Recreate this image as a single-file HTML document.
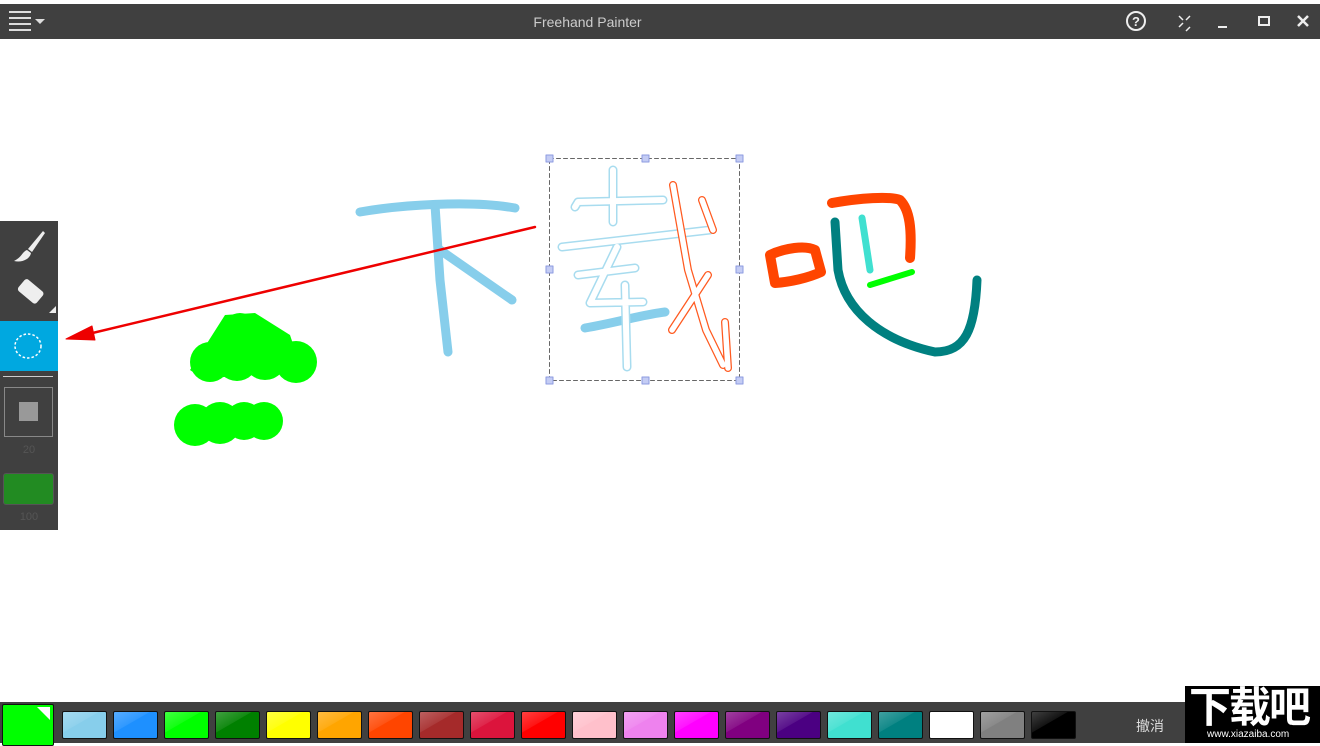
<!DOCTYPE html>
<html><head><meta charset="utf-8"><style>
body{margin:0;width:1320px;height:743px;overflow:hidden;background:#fff;font-family:"Liberation Sans","Noto Sans CJK SC",sans-serif;position:relative}
.t{position:absolute;left:0;top:4px;width:1320px;height:35px;background:#404040;color:#ccc;font-size:14px}
.sw{position:absolute;top:711px;width:43px;height:26px;border:1px solid #111;border-radius:2px;background-image:linear-gradient(150deg,rgba(255,255,255,.25) 0,rgba(255,255,255,.08) 40%,rgba(255,255,255,0) 41%)}
</style></head><body>
<div class="t">
<svg width="50" height="35" style="position:absolute;left:0;top:0"><g stroke="#ddd" stroke-width="2"><line x1="9" y1="8" x2="31" y2="8"/><line x1="9" y1="14" x2="31" y2="14"/><line x1="9" y1="20" x2="31" y2="20"/><line x1="9" y1="26" x2="31" y2="26"/></g><path d="M35 15h10l-5 5z" fill="#ddd"/></svg>
<div style="position:absolute;left:0;width:1175px;text-align:center;top:10px">Freehand Painter</div>
<svg width="210" height="35" style="position:absolute;left:1110px;top:0" fill="none" stroke="#eee" stroke-width="2"><circle cx="26" cy="17" r="9"/><text x="26" y="22" font-size="13" font-weight="bold" fill="#eee" stroke="none" text-anchor="middle">?</text><path d="M69 12l4 4M80 12l-4 4M69 23l4-4M80 23l-4 4" stroke-width="1.5"/><line x1="108" y1="23" x2="117" y2="23"/><rect x="149" y="13" width="10" height="8"/><path d="M188 12l10 10M198 12l-10 10" stroke-width="2.5"/></svg>
</div>
<svg width="1320" height="743" style="position:absolute;left:0;top:0" fill="none" stroke-linecap="round" stroke-linejoin="round">
<g stroke="#87ceeb" stroke-width="9"><path d="M360 212C400 205 470 200 515 208"/><path d="M435 205L440 280L448 352"/><path d="M440 250L512 300"/><path d="M585 328C620 322 640 315 665 312"/></g>
<g stroke="#a8dcef" stroke-width="9"><path d="M613 170L613 222M575 207L578 202L663 200M562 247L710 230M617 247L590 303L643 302M578 275L635 268M625 285L627 367"/></g>
<g stroke="#fff" stroke-width="6"><path d="M613 170L613 222M575 207L578 202L663 200M562 247L710 230M617 247L590 303L643 302M578 275L635 268M625 285L627 367"/></g>
<g stroke="#ff5a20" stroke-width="8"><path d="M673 185L688 270L706 330L723 365M725 322L728 368M702 200L713 230M708 275L672 330"/></g>
<g stroke="#fff" stroke-width="5.5"><path d="M673 185L688 270L706 330L723 365M725 322L728 368M702 200L713 230M708 275L672 330"/></g>
<rect x="549.5" y="158.5" width="190" height="222" stroke="#666" stroke-dasharray="4 3"/>
<g fill="#c4ccf4" stroke="#8d9be0" stroke-width="1"><rect x="546" y="155" width="7" height="7"/><rect x="642" y="155" width="7" height="7"/><rect x="736" y="155" width="7" height="7"/><rect x="546" y="266" width="7" height="7"/><rect x="736" y="266" width="7" height="7"/><rect x="546" y="377" width="7" height="7"/><rect x="642" y="377" width="7" height="7"/><rect x="736" y="377" width="7" height="7"/></g>
<path d="M535 227L80 336" stroke="#e00" stroke-width="2.5"/><path d="M66 339L92 326L95 340z" fill="#e00" stroke="#e00" stroke-width="1"/>
<path d="M775 283L770 255C785 248 805 245 815 250L821 272C808 278 790 282 775 283" stroke="#ff4500" stroke-width="10"/>
<path d="M832 203C860 198 890 196 900 200C910 210 912 230 910 258" stroke="#ff4500" stroke-width="10"/>
<path d="M835 222L838 270C845 310 880 340 935 352C965 352 975 330 977 280" stroke="#008080" stroke-width="9"/>
<path d="M862 218L870 270" stroke="#40e0d0" stroke-width="7"/>
<path d="M870 285L912 272" stroke="#0f0" stroke-width="6"/>
<g fill="#0f0" stroke="none"><path d="M190 370L225 315L255 313L290 335L300 365L205 380z"/><circle cx="210" cy="362" r="20"/><circle cx="237" cy="360" r="21"/><circle cx="265" cy="358" r="22"/><circle cx="296" cy="362" r="21"/><circle cx="240" cy="330" r="17"/><circle cx="195" cy="425" r="21"/><circle cx="220" cy="423" r="21"/><circle cx="244" cy="421" r="19"/><circle cx="264" cy="421" r="19"/></g>
</svg>
<div style="position:absolute;left:0;top:221px;width:58px;height:309px;background:#404040">
<svg width="58" height="100" style="position:absolute;left:0;top:0"><path d="M43 10L28 28L32 31L45 12z" fill="#eee"/><path d="M27 29C22 31 22 36 14 40C22 42 30 38 31 32z" fill="#eee"/><rect x="19" y="63" width="24" height="15" rx="3" transform="rotate(40 31 70)" fill="#eee"/><path d="M49 92L56 85L56 92z" fill="#eee"/></svg>
<div style="position:absolute;left:0;top:100px;width:58px;height:50px;background:#00a8e0"><svg width="58" height="50"><ellipse cx="28" cy="25" rx="13" ry="12" fill="none" stroke="#fff" stroke-width="1.5" stroke-dasharray="2.5 2"/></svg></div>
<div style="position:absolute;left:3px;top:155px;width:50px;height:1px;background:#ccc"></div>
<div style="position:absolute;left:4px;top:166px;width:47px;height:48px;border:1px solid #888"><div style="position:absolute;left:14px;top:14px;width:19px;height:19px;background:#999"></div></div>
<div style="position:absolute;left:0;width:58px;text-align:center;top:223px;font-size:11px;color:#555">20</div>
<div style="position:absolute;left:3px;top:252px;width:49px;height:30px;background:#228b22;border:1px solid #555;border-radius:3px"></div>
<div style="position:absolute;left:0;width:58px;text-align:center;top:290px;font-size:11px;color:#555">100</div>
</div>
<div style="position:absolute;left:0;top:702px;width:1320px;height:41px;background:#404040"></div>
<div style="position:absolute;left:2px;top:704px;width:50px;height:40px;background:#0f0;border:1px solid #111;border-radius:2px"><svg width="14" height="14" style="position:absolute;right:2px;top:2px"><path d="M0 0H13V13z" fill="#fff"/></svg></div>
<div class="sw" style="left:62px;background-color:#87ceeb"></div>
<div class="sw" style="left:113px;background-color:#1e90ff"></div>
<div class="sw" style="left:164px;background-color:#00ff00"></div>
<div class="sw" style="left:215px;background-color:#008000"></div>
<div class="sw" style="left:266px;background-color:#ffff00"></div>
<div class="sw" style="left:317px;background-color:#ffa500"></div>
<div class="sw" style="left:368px;background-color:#ff4500"></div>
<div class="sw" style="left:419px;background-color:#a52a2a"></div>
<div class="sw" style="left:470px;background-color:#dc143c"></div>
<div class="sw" style="left:521px;background-color:#ff0000"></div>
<div class="sw" style="left:572px;background-color:#ffc0cb"></div>
<div class="sw" style="left:623px;background-color:#ee82ee"></div>
<div class="sw" style="left:674px;background-color:#ff00ff"></div>
<div class="sw" style="left:725px;background-color:#800080"></div>
<div class="sw" style="left:776px;background-color:#4b0082"></div>
<div class="sw" style="left:827px;background-color:#40e0d0"></div>
<div class="sw" style="left:878px;background-color:#008080"></div>
<div class="sw" style="left:929px;background-color:#ffffff"></div>
<div class="sw" style="left:980px;background-color:#808080"></div>
<div class="sw" style="left:1031px;background-color:#000000"></div>
<div style="position:absolute;left:1136px;top:716px;color:#ddd;font-size:14px">撤消</div>
<div style="position:absolute;left:1185px;top:686px;width:135px;height:57px;background:#000;color:#fff">
<div style="position:absolute;left:4px;top:-2px;font-size:42px;font-weight:bold;letter-spacing:-2px;line-height:48px">下载吧</div>
<div style="position:absolute;left:22px;top:43px;font-size:10px">www.xiazaiba.com</div>
</div>
</body></html>
